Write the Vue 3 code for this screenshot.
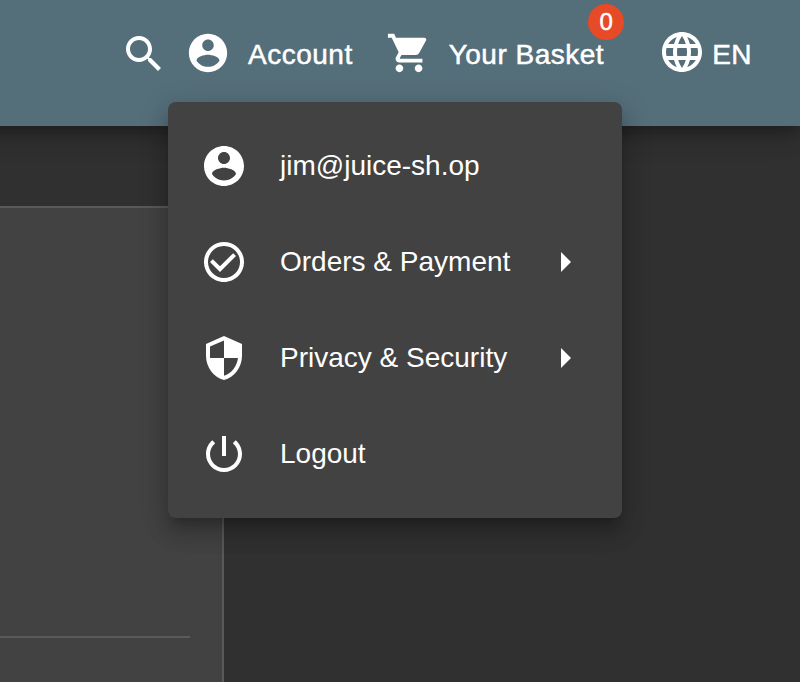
<script setup>
const accountIcon = 'M12 2C6.48 2 2 6.48 2 12s4.48 10 10 10 10-4.48 10-10S17.52 2 12 2zm0 3c1.66 0 3 1.34 3 3s-1.34 3-3 3-3-1.34-3-3 1.34-3 3-3zm0 14.2c-2.5 0-4.71-1.28-6-3.22.03-1.99 4-3.08 6-3.08 1.99 0 5.97 1.09 6 3.08-1.29 1.94-3.5 3.22-6 3.22z'

const menuItems = [
  {
    label: 'jim@juice-sh.op',
    icon: accountIcon,
    submenu: false
  },
  {
    label: 'Orders & Payment',
    icon: 'M12 2C6.48 2 2 6.48 2 12s4.48 10 10 10 10-4.48 10-10S17.52 2 12 2zm0 18c-4.41 0-8-3.59-8-8s3.59-8 8-8 8 3.59 8 8-3.59 8-8 8zM16.59 7.58L10 14.17l-3.59-3.58L5 12l5 5 8-8z',
    submenu: true
  },
  {
    label: 'Privacy & Security',
    icon: 'M12 1L3 5v6c0 5.55 3.84 10.74 9 12 5.16-1.26 9-6.45 9-12V5l-9-4zm0 10.99h7c-.53 4.12-3.28 7.79-7 8.94V12H5V6.3l7-3.11v8.8z',
    submenu: true
  },
  {
    label: 'Logout',
    icon: 'M13 3h-2v10h2V3zm4.83 2.17l-1.42 1.42C17.99 7.86 19 9.81 19 12c0 3.87-3.13 7-7 7s-7-3.13-7-7c0-2.19 1.01-4.14 2.58-5.42L6.17 5.17C4.23 6.82 3 9.26 3 12c0 4.97 4.03 9 9 9s9-4.03 9-9c0-2.74-1.23-5.18-3.17-6.83z',
    submenu: false
  }
]
</script>

<template>
  <div class="page">
    <header class="toolbar">
      <button class="search" aria-label="Search">
        <svg class="icon" viewBox="0 0 24 24"><path d="M15.5 14h-.79l-.28-.27C15.41 12.59 16 11.11 16 9.5 16 5.91 13.09 3 9.5 3S3 5.91 3 9.5 5.91 16 9.5 16c1.61 0 3.09-.59 4.23-1.57l.27.28v.79l5 4.99L20.49 19l-4.99-5zm-6 0C7.01 14 5 11.99 5 9.5S7.01 5 9.5 5 14 7.01 14 9.5 11.99 14 9.5 14z" /></svg>
      </button>
      <button class="account">
        <svg class="icon small" viewBox="0 0 24 24"><path :d="accountIcon" /></svg>
        <span>Account</span>
      </button>
      <button class="basket">
        <svg class="icon small" viewBox="0 0 24 24"><path d="M7 18c-1.1 0-1.99.9-1.99 2S5.9 22 7 22s2-.9 2-2-.9-2-2-2zM1 2v2h2l3.6 7.59-1.35 2.45c-.16.28-.25.61-.25.96 0 1.1.9 2 2 2h12v-2H7.42c-.14 0-.25-.11-.25-.25l.03-.12.9-1.63h7.45c.75 0 1.41-.41 1.75-1.03l3.58-6.49c.08-.14.12-.31.12-.48 0-.55-.45-1-1-1H5.21l-.94-2H1zm16 16c-1.1 0-1.99.9-1.99 2s.89 2 1.99 2 2-.9 2-2-.9-2-2-2z" /></svg>
        <span>Your Basket</span>
        <span class="badge">0</span>
      </button>
      <button class="language">
        <svg class="icon" viewBox="0 0 24 24"><path d="M11.99 2C6.47 2 2 6.48 2 12s4.47 10 9.99 10C17.52 22 22 17.52 22 12S17.52 2 11.99 2zm6.93 6h-2.95c-.32-1.25-.78-2.45-1.38-3.56 1.84.63 3.37 1.91 4.33 3.56zM12 4.04c.83 1.2 1.48 2.53 1.91 3.96h-3.82c.43-1.43 1.08-2.76 1.91-3.96zM4.26 14C4.1 13.36 4 12.69 4 12s.1-1.36.26-2h3.38c-.08.66-.14 1.32-.14 2s.06 1.34.14 2H4.26zm.82 2h2.95c.32 1.25.78 2.45 1.38 3.56-1.84-.63-3.37-1.9-4.33-3.56zm2.95-8H5.08c.96-1.66 2.49-2.93 4.33-3.56C8.81 5.55 8.35 6.75 8.03 8zM12 19.96c-.83-1.2-1.48-2.53-1.91-3.96h3.82c-.43 1.43-1.08 2.76-1.91 3.96zM14.34 14H9.66c-.09-.66-.16-1.32-.16-2s.07-1.35.16-2h4.68c.09.65.16 1.32.16 2s-.07 1.34-.16 2zm.25 5.56c.6-1.11 1.06-2.31 1.38-3.56h2.95c-.96 1.65-2.49 2.93-4.33 3.56zM16.36 14c.08-.66.14-1.32.14-2s-.06-1.34-.14-2h3.38c.16.64.26 1.31.26 2s-.1 1.36-.26 2h-3.38z" /></svg>
        <span>EN</span>
      </button>
    </header>

    <main class="content">
      <section class="card"><div class="divider"></div></section>
    </main>

    <nav class="menu">
      <button v-for="item in menuItems" :key="item.label" class="menu-item">
        <svg class="icon" viewBox="0 0 24 24"><path :d="item.icon" /></svg>
        <span>{{ item.label }}</span>
        <i v-if="item.submenu" class="arrow"></i>
      </button>
    </nav>
  </div>
</template>

<style>
body {
  margin: 0;
  background: #303030;
}
</style>

<style scoped>
.page {
  position: relative;
  box-sizing: border-box;
  width: 800px;
  height: 682px;
  overflow: hidden;
  display: flex;
  flex-direction: column;
  background: #303030;
  color: #fff;
  font-family: "Liberation Sans", Arial, sans-serif;
}
button {
  border: 0;
  margin: 0;
  padding: 0;
  background: none;
  color: inherit;
  font: inherit;
  letter-spacing: inherit;
  white-space: nowrap;
  display: flex;
  align-items: center;
}
.icon {
  width: 48px;
  height: 48px;
  flex: none;
  fill: currentColor;
}
.icon.small {
  width: 46px;
  height: 46px;
}
.toolbar {
  position: relative;
  z-index: 1;
  box-sizing: border-box;
  height: 126px;
  flex: none;
  display: flex;
  align-items: flex-start;
  margin-left: -40px;
  padding: 28px 0 0 160px;
  background: #546e7a;
  box-shadow: 0 6px 10px -2px rgba(0, 0, 0, 0.2), 0 12px 20px 0 rgba(0, 0, 0, 0.14), 0 2px 36px 0 rgba(0, 0, 0, 0.12);
  font-size: 28px;
  line-height: 48px;
  letter-spacing: 0.5px;
  -webkit-text-stroke: 0.5px #fff;
}
.search {
  margin-top: 2px;
}
.account {
  margin: 2px 0 0 17px;
  height: 46px;
  gap: 17px;
}
.basket {
  position: relative;
  margin: 2px 0 0 33px;
  height: 46px;
  gap: 17px;
}
.account span,
.basket span {
  padding-top: 4px;
}
.language {
  margin-left: 54px;
  height: 48px;
  gap: 6px;
}
.language span {
  padding-top: 6px;
}
.basket .badge {
  position: absolute;
  top: -26px;
  right: -20px;
  width: 36px;
  height: 36px;
  padding: 0;
  border-radius: 50%;
  background: #e64a27;
  font-size: 24px;
  line-height: 35px;
  letter-spacing: 0;
  text-align: center;
}
.content {
  flex: 1;
  padding-top: 80px;
  display: flex;
}
.card {
  box-sizing: border-box;
  width: 224px;
  border-top: 2px solid #595959;
  border-right: 2px solid #595959;
  background: #424242;
  padding: 428px 32px 0 0;
}
.divider {
  height: 2px;
  background: #5a5a5a;
}
.menu {
  position: absolute;
  z-index: 2;
  left: 168px;
  top: 102px;
  box-sizing: border-box;
  width: 454px;
  padding: 16px 0;
  border-radius: 8px;
  background: #424242;
  box-shadow: 0 10px 10px -6px rgba(0, 0, 0, 0.2), 0 16px 20px 2px rgba(0, 0, 0, 0.14), 0 6px 28px 4px rgba(0, 0, 0, 0.12);
}
.menu-item {
  box-sizing: border-box;
  width: 100%;
  height: 96px;
  padding: 0 51px 0 32px;
  gap: 32px;
  font-size: 28px;
  line-height: 96px;
}
.arrow {
  margin-left: auto;
  border-style: solid;
  border-width: 10px 0 10px 10px;
  border-color: transparent transparent transparent #fff;
}
</style>
